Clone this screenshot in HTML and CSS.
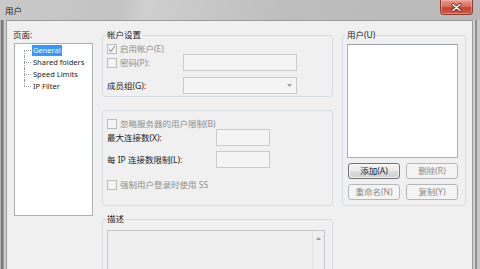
FILE: index.html
```html
<!DOCTYPE html>
<html lang="zh-CN">
<head>
<meta charset="utf-8">
<title>用户</title>
<link rel="stylesheet" href="styles.css">
</head>
<body>
<div class="window">
  <div class="titlebar">
    <span class="title">用户</span>
    <button class="close" aria-label="关闭">
      <svg width="11" height="9" viewBox="0 0 11 9"><path d="M2 1.5L9 7.5M9 1.5L2 7.5" stroke="#6b2a22" stroke-width="3" stroke-linecap="round"/><path d="M2 1.5L9 7.5M9 1.5L2 7.5" stroke="#ffffff" stroke-width="1.6" stroke-linecap="round"/></svg>
    </button>
  </div>
  <div class="frame">
    <div class="client">
      <div class="col-pages">
        <div class="pages-label">页面:</div>
        <div class="tree">
          <ul class="tree-list">
            <li class="first"><span class="item sel">General</span></li>
            <li><span class="item">Shared folders</span></li>
            <li><span class="item">Speed Limits</span></li>
            <li class="last"><span class="item">IP Filter</span></li>
          </ul>
        </div>
      </div>

      <div class="col-main">
        <fieldset class="grp grp-account">
          <legend>帐户设置</legend>
          <div class="row r-11">
            <span class="cb"><svg width="8" height="8" viewBox="0 0 8 8"><path d="M1 4.2L3 6.3L7 1" fill="none" stroke="#9a9a9a" stroke-width="1.2"/></svg></span>
            <span class="dis">启用帐户(E)</span>
          </div>
          <div class="row r-17">
            <span class="lbl w76"><span class="cb"></span><span class="dis">密码(P):</span></span>
            <input class="field w114" type="password" disabled>
          </div>
          <div class="row r-17 mt6">
            <span class="lbl w76">成员组(G):</span>
            <div class="combo w114">
              <svg width="5" height="3" viewBox="0 0 5 3"><path d="M0 0H5L2.5 3Z" fill="#a0a0a0"/></svg>
            </div>
          </div>
        </fieldset>

        <fieldset class="grp grp-limits">
          <div class="row r-11">
            <span class="cb"></span>
            <span class="dis">忽略服务器的用户限制(B)</span>
          </div>
          <div class="row r-17">
            <span class="lbl w109">最大连接数(X):</span>
            <input class="field w54" type="text" disabled>
          </div>
          <div class="row r-17 mt5">
            <span class="lbl w109">每 IP 连接数限制(L):</span>
            <input class="field w54" type="text" disabled>
          </div>
          <div class="row r-11 mt11">
            <span class="cb"></span>
            <span class="dis">强制用户登录时使用 SS</span>
          </div>
        </fieldset>

        <fieldset class="grp grp-desc">
          <legend>描述</legend>
          <div class="desc">
            <div class="desc-text"></div>
            <div class="vscroll">
              <svg width="5" height="3" viewBox="0 0 5 3"><path d="M0 3H5L2.5 0Z" fill="#9a9a9a"/></svg>
            </div>
          </div>
        </fieldset>
      </div>

      <div class="col-users">
        <fieldset class="grp grp-users">
          <legend>用户(U)</legend>
          <div class="userlist"></div>
          <div class="btn-row">
            <button class="btn">添加(A)</button>
            <button class="btn" disabled>删除(R)</button>
          </div>
          <div class="btn-row mt5">
            <button class="btn" disabled>重命名(N)</button>
            <button class="btn" disabled>复制(Y)</button>
          </div>
        </fieldset>
      </div>
    </div>
  </div>
</div>
</body>
</html>
```

FILE: styles.css
```css
* { box-sizing: border-box; }
html, body { margin: 0; padding: 0; }
body {
  width: 480px;
  height: 269px;
  overflow: hidden;
  background: #c2c2c2;
  font-family: "Noto Sans", "Noto Sans CJK SC", sans-serif;
  font-size: 8.5px;
  color: #1c1c1c;
}

.window {
  display: flex;
  flex-direction: column;
  height: 269px;
}

/* title bar */
.titlebar {
  height: 20px;
  flex: none;
  display: flex;
  justify-content: space-between;
  align-items: flex-start;
  padding: 0 7px 0 5px;
  background: linear-gradient(100deg, #c9c9c9 0%, #c3c3c3 25%, #cfcfcf 30%, #bdbdbd 60%, #b9b9b9 100%);
}
.title {
  margin-top: 5px;
  line-height: 12px;
  font-size: 8.5px;
  color: #202020;
}
.close {
  width: 33px;
  height: 15px;
  margin: 0;
  padding: 0;
  border: 1px solid #8a3b31;
  border-top: none;
  border-radius: 0 0 4px 4px;
  background: linear-gradient(#e49a8c 0%, #d8715f 45%, #c5442f 55%, #cf5a44 100%);
  box-shadow: inset 0 0 0 1px rgba(255, 200, 190, 0.45);
  display: flex;
  align-items: center;
  justify-content: center;
}
.close svg { display: block; }

/* frame with window borders */
.frame {
  flex: 1;
  display: flex;
  min-height: 0;
  padding: 0 7px 0 6px;
  background: linear-gradient(to right,
    #b4b4b4 0, #b4b4b4 1px,
    #7a7a7a 1px, #7a7a7a 3px,
    #9c9c9c 3px, #9c9c9c 4px,
    #cfcfcf 4px, #cfcfcf 6px,
    #c4c4c4 6px, #c4c4c4 calc(100% - 7px),
    #d2d2d2 calc(100% - 7px), #d2d2d2 calc(100% - 5px),
    #8e8e8e calc(100% - 5px), #8e8e8e calc(100% - 3px),
    #c8c8c8 calc(100% - 3px));
}

.client {
  flex: 1;
  display: flex;
  align-items: flex-start;
  gap: 9px;
  overflow: hidden;
  padding: 8px 6px 0 6px;
  background: #f0f0f0;
  border: 1px solid #9a9a9a;
  border-bottom: none;
}

/* left pages column */
.col-pages {
  width: 80px;
  flex: none;
  display: flex;
  flex-direction: column;
}
.pages-label {
  line-height: 12px;
  color: #1c1c1c;
}
.tree {
  margin: 2px 0 0 1px;
  width: 79px;
  height: 173px;
  background: #ffffff;
  border: 1px solid #a9b0b8;
}
.tree-list {
  list-style: none;
  margin: 0;
  padding: 0;
}
.tree-list li {
  position: relative;
  height: 12px;
  padding-left: 17px;
  display: flex;
  align-items: center;
}
.tree-list li::before {
  content: "";
  position: absolute;
  left: 9px;
  top: 6px;
  width: 7px;
  border-top: 1px dotted #9a9a9a;
}
.tree-list li::after {
  content: "";
  position: absolute;
  left: 9px;
  top: 0;
  bottom: 0;
  border-left: 1px dotted #9a9a9a;
}
.tree-list li.first::after { top: 6px; }
.tree-list li.last::after { bottom: 6px; }
.item {
  font-size: 7.5px;
  line-height: 11px;
  padding: 0 1px;
  color: #1c1c1c;
  white-space: nowrap;
}
.item.sel {
  background: #3399ff;
  color: #ffffff;
}

/* middle column */
.col-main {
  width: 231px;
  flex: none;
  display: flex;
  flex-direction: column;
}

.grp {
  margin: 0;
  min-width: 0;
  border: 1px solid #d6dce1;
  border-radius: 3px;
  padding: 2px 4px 2px 4px;
}
.grp legend {
  padding: 0 1px;
  margin-left: -1px;
  line-height: 12px;
  font-size: 8.5px;
  color: #1c1c1c;
}

.grp-limits {
  margin-top: 13px;
  padding: 7px 4px 15px 4px;
}
.grp-desc {
  margin-top: 7px;
  padding: 5px 4px 0 4px;
}

.row {
  display: flex;
  align-items: center;
  line-height: 12px;
  white-space: nowrap;
}
.r-11 { height: 11px; }
.r-17 { height: 17px; }
.mt5 { margin-top: 5px; }
.mt6 { margin-top: 6px; }
.mt11 { margin-top: 11px; }

.lbl {
  display: flex;
  align-items: center;
  flex: none;
}
.w76 { width: 76px; }
.w109 { width: 109px; }

.cb {
  width: 10px;
  height: 10px;
  flex: none;
  margin-right: 3px;
  border: 1px solid #bcbcbc;
  background: #f4f4f4;
  display: flex;
  align-items: center;
  justify-content: center;
}
.cb svg { display: block; }

.dis { color: #8e8e8e; }

.field {
  height: 17px;
  margin: 0;
  padding: 0;
  border: 1px solid #cbcbcb;
  background: #f4f4f4;
  font: inherit;
  -webkit-appearance: none;
  appearance: none;
  border-radius: 0;
}
.w114 { width: 114px; }
.w54 { width: 54px; }

.combo {
  height: 17px;
  border: 1px solid #cbcbcb;
  background: #f4f4f4;
  display: flex;
  align-items: center;
  justify-content: flex-end;
  padding-right: 4px;
}
.combo svg { display: block; }

.desc {
  width: 218px;
  height: 60px;
  display: flex;
  border: 1px solid #c6c6c6;
  background: #efefef;
}
.desc-text { flex: 1; }
.vscroll {
  width: 12px;
  flex: none;
  border-left: 1px solid #e2e2e2;
  display: flex;
  justify-content: center;
  padding-top: 6px;
}
.vscroll svg { display: block; }

/* right users column */
.col-users {
  width: 124px;
  flex: none;
}
.grp-users {
  padding: 3px 7px 5px 4px;
}
.userlist {
  height: 114px;
  background: #ffffff;
  border: 1px solid #a9b0b8;
  border-top-color: #9aa0a8;
}
.btn-row {
  display: flex;
  gap: 6px;
  margin-left: 1px;
  margin-top: 5px;
}
.btn {
  width: 52px;
  height: 16px;
  margin: 0;
  padding: 0;
  font: inherit;
  font-size: 8.5px;
  line-height: 12px;
  color: #1c1c1c;
  border: 1px solid #707070;
  border-radius: 3px;
  background: linear-gradient(#f4f4f4 0%, #ebebeb 48%, #dddddd 52%, #cfcfcf 100%);
  box-shadow: inset 0 0 0 1px rgba(255, 255, 255, 0.7);
}
.btn:disabled {
  color: #8a8a8a;
  border-color: #b4b8bb;
  background: #f4f4f4;
  box-shadow: none;
}
```
